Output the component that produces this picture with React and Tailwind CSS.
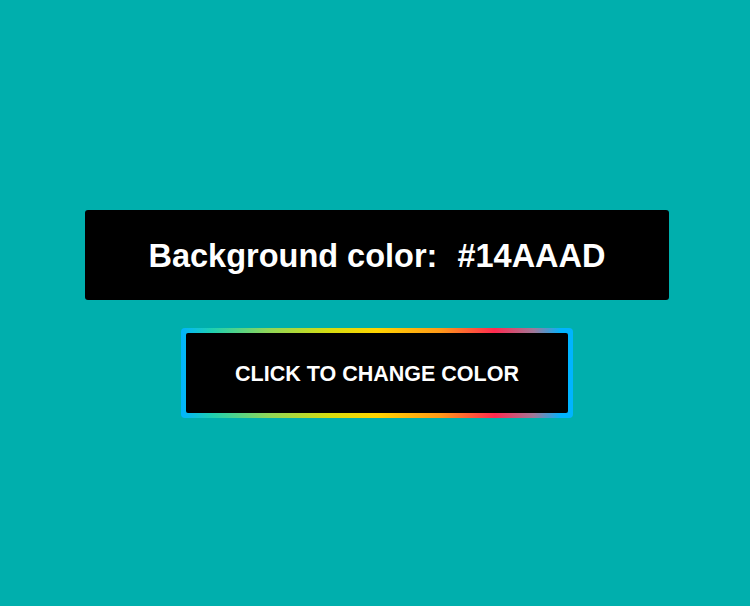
export default function App() {
  return (
    <div
      className="min-h-[606px] w-full bg-[#00AFAD] flex flex-col items-center pt-[210px] pl-[4px]"
      style={{ fontFamily: '"Liberation Sans", Arial, sans-serif' }}
    >
      <div className="w-[584px] h-[90px] bg-black rounded-[3px] flex items-center justify-center pt-[3px]">
        <h1 className="text-white font-bold text-[32.5px] leading-none whitespace-pre">
          Background color:<span className="ml-[20px]">#14AAAD</span>
        </h1>
      </div>
      <div className="mt-[28px] p-[5px] rounded-[4px] bg-[linear-gradient(90deg,#00b4ff_0%,#1fd0b0_8%,#8ed65a_22%,#d6dc10_38%,#ffd400_50%,#ff9a18_66%,#ff2a50_80%,#a07898_90%,#00b4ff_97%)]">
        <button className="w-[382px] h-[80px] bg-black rounded-[2px] text-white font-bold text-[21.5px] uppercase pt-[2px]">
          Click to change color
        </button>
      </div>
    </div>
  );
}
